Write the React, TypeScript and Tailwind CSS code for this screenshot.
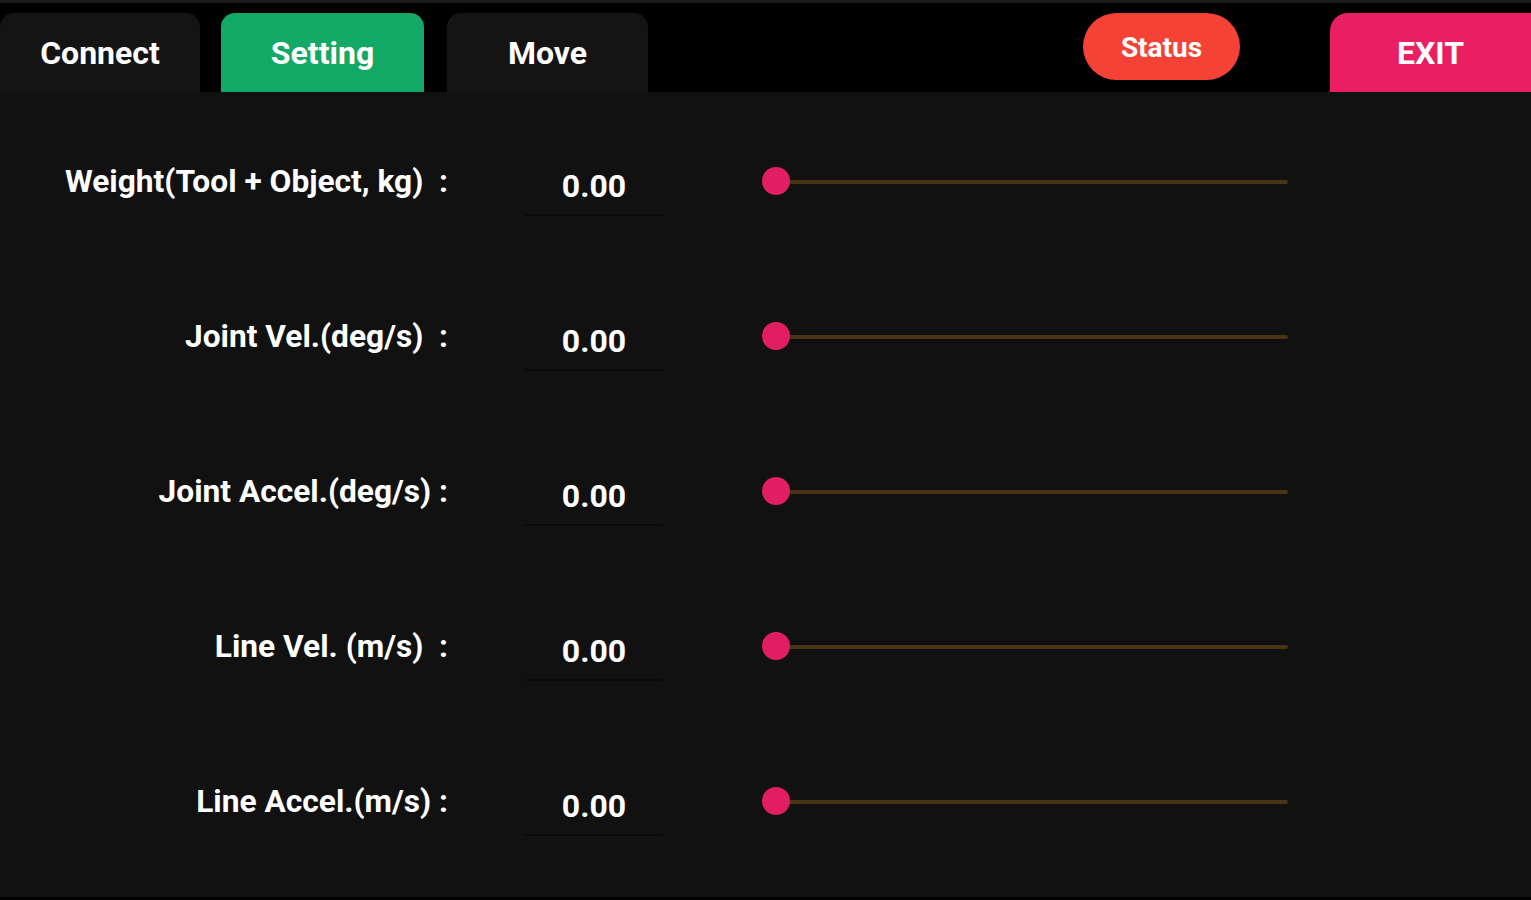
import React from "react";

const rows = [
  "Weight(Tool + Object, kg)  :",
  "Joint Vel.(deg/s)  :",
  "Joint Accel.(deg/s) :",
  "Line Vel. (m/s)  :",
  "Line Accel.(m/s) :",
];

export default function App() {
  return (
    <div
      className="w-[1531px] h-[900px] bg-black flex flex-col overflow-hidden"
      style={{ fontFamily: "Roboto, 'Liberation Sans', sans-serif" }}
    >
      <div className="h-[3px] shrink-0 bg-[#1c1c1c]" />
      <div className="h-[89px] shrink-0 flex items-end pt-[10px]">
        <div className="w-[200px] h-[79px] rounded-t-[14px] bg-[#141414] flex items-center justify-center text-white font-bold text-[32px]">
          Connect
        </div>
        <div className="ml-[21px] w-[203px] h-[79px] rounded-t-[14px] bg-[#12a865] flex items-center justify-center text-white font-bold text-[32px]">
          Setting
        </div>
        <div className="ml-[23px] w-[201px] h-[79px] rounded-t-[14px] bg-[#141414] flex items-center justify-center text-white font-bold text-[32px]">
          Move
        </div>
        <div className="flex-1 h-[79px] flex items-start">
          <div className="ml-[435px] w-[157px] h-[67px] rounded-full bg-[#f44336] flex items-center justify-center pt-[3px] text-white font-bold text-[28px]">
            Status
          </div>
        </div>
        <div className="w-[201px] h-[79px] rounded-tl-[18px] bg-[#e91e63] flex items-center justify-center text-white font-bold text-[32px]">
          EXIT
        </div>
      </div>
      <div className="h-[805px] shrink-0 bg-[#111111] flex flex-col gap-[87px] pt-[56px]">
        {rows.map((label) => (
          <div key={label} className="h-[68px] shrink-0 flex items-start">
            <div className="w-[448px] h-[68px] flex items-center justify-end text-white font-bold text-[31.7px] whitespace-pre">
              {label}
            </div>
            <div className="ml-[77px] w-[138px] h-[68px] flex flex-col">
              <div className="h-[66px] flex items-center justify-center pt-[9px] text-white font-bold text-[32px]">
                0.00
              </div>
              <div className="h-[2px] bg-[#0a0a0a]" />
            </div>
            <div className="ml-[99px] w-[540px] h-[68px] flex items-center relative">
              <div className="ml-[14px] w-[512px] h-[4px] bg-[#4a3416] rounded-full" />
              <div className="absolute left-0 top-[19px] w-[28px] h-[28px] rounded-full bg-[#e21e62]" />
            </div>
          </div>
        ))}
      </div>
      <div className="flex-1 bg-black" />
    </div>
  );
}
